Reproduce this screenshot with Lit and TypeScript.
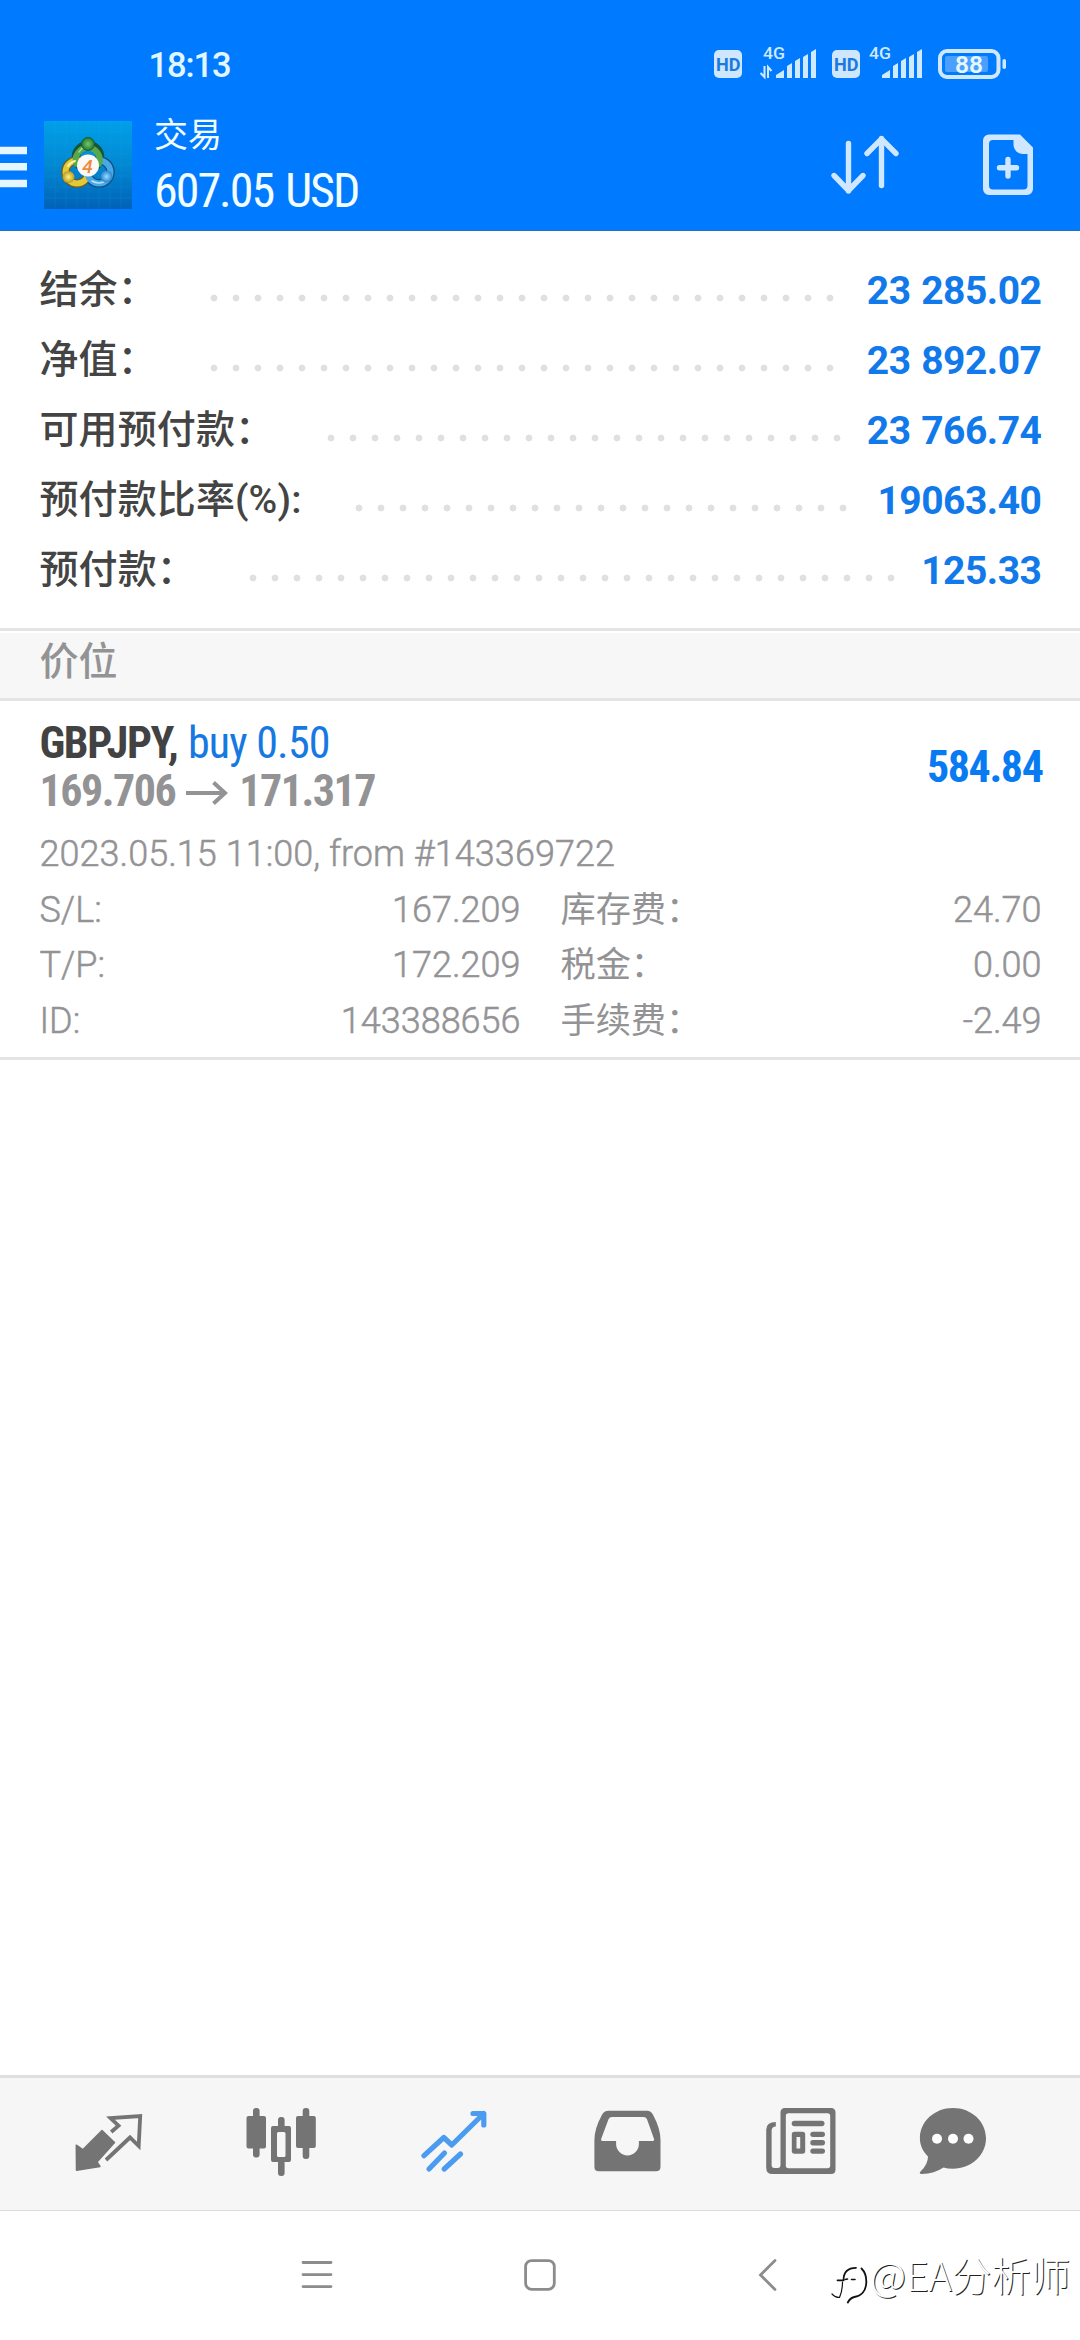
import { LitElement, html, css, svg } from "lit";
import { customElement } from "lit/decorators.js";

interface SummaryRow { label: string; value: string; dots: number; }

const SUMMARY: SummaryRow[] = [
  { label: "结余：", value: "23 285.02", dots: 29 },
  { label: "净值：", value: "23 892.07", dots: 29 },
  { label: "可用预付款：", value: "23 766.74", dots: 24 },
  { label: "预付款比率(%):", value: "19063.40", dots: 23 },
  { label: "预付款：", value: "125.33", dots: 30 },
];

const DETAILS = [
  ["S/L:", "167.209", "库存费：", "24.70"],
  ["T/P:", "172.209", "税金：", "0.00"],
  ["ID:", "143388656", "手续费：", "-2.49"],
];

const signal = svg`<path d="M0 29v-3l8-5v8zM11 29V17l5-3v15zM19 29V12l5-3v20zM27 29V8l5-3v24zM35 29V3l5-3v29z" fill="#cfeaff"/>`;

@customElement("app-root")
export class AppRoot extends LitElement {
  static styles = css`
    :host {
      display: flex;
      flex-direction: column;
      width: 1080px;
      height: 2340px;
      overflow: hidden;
      position: relative;
      background: #fff;
      font-family: Roboto, "Noto Sans CJK SC", sans-serif;
      color: #939395;
    }
    svg { display: block; flex: none; overflow: visible; }
    .head { background: #007aff; height: 230px; border-bottom: 1px solid #1f6fc4; color: #f2fdff; flex: none; }
    .status { display: flex; height: 86px; align-items: flex-start; }
    .time { font-size: 34.5px; font-weight: 500; line-height: 40px; margin: 45px 0 0 148.5px; width: 565.5px; letter-spacing: -1.1px; color: #e0f7ff; }
    .sicons { margin-top: 45px; }
    .bar { display: flex; align-items: flex-start; height: 144px; }
    .burger { margin-top: 60px; }
    .logo { margin: 35px 0 0 17px; }
    .titles { margin: 28px 0 0 22px; width: 677px; }
    .title { font-size: 34px; line-height: 42px; }
    .cond { font-family: "Roboto Condensed", Roboto, sans-serif; font-stretch: 75%; white-space: nowrap; }
    .sum { font-size: 48px; line-height: 56px; margin-top: 7px; letter-spacing: -2px; word-spacing: 3px; }
    .summary { padding: 24px 38.6px 23px 39.5px; border-bottom: 3px solid #e4e4e4; flex: none; }
    .row { display: flex; height: 70px; align-items: center; font-size: 39px; }
    .label { color: #444; font-weight: 500; white-space: nowrap; height: 50px; line-height: 50px; margin-top: -1px; letter-spacing: 0.1px; }
    .leader { height: 8px; margin: 15px auto 0 46px; background: radial-gradient(circle at 11px 4px, #e0e0e0 3px, transparent 3.8px) 0 0 / 22px 8px repeat-x; }
    .value { color: #1279ea; font-weight: 700; white-space: nowrap; letter-spacing: -0.5px; word-spacing: 1.5px; margin-top: 2px; }
    .section { margin-top: 2px; height: 65px; line-height: 58px; background: #f7f7f7; border-bottom: 3px solid #e4e4e4; padding-left: 39.5px; font-size: 39px; font-weight: 500; flex: none; }
    .position { padding: 18px 38.5px 0 39.5px; height: 338px; border-bottom: 3px solid #e4e4e4; flex: none; }
    .top { display: flex; justify-content: space-between; align-items: center; font-size: 44px; height: 96px; letter-spacing: -1.4px; }
    .line { line-height: 48px; height: 48px; display: flex; align-items: center; }
    .sym { color: #424242; font-weight: 700; }
    .side { color: #1778e2; margin-left: 10.5px; letter-spacing: -0.8px; }
    .price { font-weight: 700; letter-spacing: -1.5px; }
    .arrow { margin: 4px 11px 0 11px; }
    .profit { color: #087bf2; font-weight: 700; margin-right: -1px; }
    .date { font-size: 36px; font-weight: 300; -webkit-text-stroke: 0.5px #939395; line-height: 44px; margin-top: 17px; letter-spacing: 0.04px; }
    .grid { display: grid; grid-template-columns: 240px 241px 40px 220px 1fr; grid-auto-rows: 55.3px; font-size: 36px; font-weight: 300; -webkit-text-stroke: 0.5px #939395; line-height: 55.3px; margin-top: 7px; white-space: nowrap; }
    .r { text-align: right; }
    .c3 { grid-column: 4; font-size: 35.2px; font-weight: 370; -webkit-text-stroke: 0; }
    .c4 { grid-column: 5; }
    .space { flex: 1; }
    .tabs { display: flex; height: 110px; padding: 22px 0 0 68px; gap: 93px; background: #f6f6f6; border-top: 3px solid #dfdfdf; border-bottom: 1px solid #dcdcdc; flex: none; }
    .chat { margin-left: -21px; }
    .sysnav { display: flex; height: 129px; padding-top: 44px; box-sizing: border-box; flex: none; }
    .n1 { margin-left: 297px; }
    .n2 { margin-left: 183px; }
    .n3 { margin-left: 187px; }
    .mark { position: absolute; left: 830px; top: 2246px; display: flex; align-items: center; height: 54px; color: #fff; font-size: 39.5px; font-weight: 300; font-family: "Noto Sans CJK SC", sans-serif; text-shadow: 1px 1px 0 #222; white-space: nowrap; }
  `;

  render() {
    return html`
      <header class="head">
        <div class="status">
          <div class="time">18:13</div>
          <svg class="sicons" width="296" height="40" viewBox="714 45 296 40">
            <g font-family="Roboto" font-weight="700">
              <rect x="714" y="50" width="28" height="28" rx="5" fill="#cfe6ff"/>
              <text x="716" y="71" font-size="19" textLength="24.500" lengthAdjust="spacingAndGlyphs" fill="#1b7ae0">HD</text>
              <rect x="832" y="50" width="28" height="28" rx="5" fill="#cfe6ff"/>
              <text x="834" y="71" font-size="19" textLength="24.500" lengthAdjust="spacingAndGlyphs" fill="#1b7ae0">HD</text>
            </g>
            <g font-family="Roboto" font-size="16.5" font-weight="500" fill="#cfeaff">
              <text x="763" y="59" textLength="22" lengthAdjust="spacingAndGlyphs">4G</text>
              <text x="869" y="59" textLength="22" lengthAdjust="spacingAndGlyphs">4G</text>
            </g>
            <path d="M764.5 66v11l-4-4M768 78V67l3.5 4" fill="none" stroke="#cfeaff" stroke-width="2"/>
            <g transform="translate(776 49)">${signal}</g>
            <g transform="translate(882 49)">${signal}</g>
            <rect x="940" y="51" width="58.500" height="26" rx="7" fill="none" stroke="#cfe8ff" stroke-width="4"/>
            <rect x="945" y="56" width="43" height="16" rx="2" fill="#4ba0ff"/>
            <rect x="1002.500" y="59" width="3.500" height="10" rx="1.700" fill="#cfe8ff"/>
            <text x="955" y="72.500" font-family="Roboto" font-size="23" font-weight="600" textLength="28" lengthAdjust="spacingAndGlyphs" fill="#e6f8ff">88</text>
          </svg>
        </div>
        <div class="bar">
          <svg class="burger" width="27" height="42" viewBox="0 146 27 42">
            <path d="M0 146.700h27v7.500H0zM0 163h27v7.500H0zM0 179.700h27v7.500H0z" fill="#e6f6ff"/>
          </svg>
          <svg class="logo" width="88" height="88" viewBox="0 0 88 88">
            <defs>
              <linearGradient id="bg" x1="0" y1="0" x2="0" y2="1"><stop offset="0" stop-color="#00a0e8"/><stop offset=".5" stop-color="#0288d2"/><stop offset="1" stop-color="#0062b8"/></linearGradient>
              <radialGradient id="gg"><stop offset="0" stop-color="#7cc46a"/><stop offset="1" stop-color="#1f7a35"/></radialGradient>
              <radialGradient id="gy"><stop offset="0" stop-color="#fff08a"/><stop offset="1" stop-color="#b89a1c"/></radialGradient>
              <radialGradient id="gb"><stop offset="0" stop-color="#9bdcff"/><stop offset="1" stop-color="#2383cc"/></radialGradient>
            </defs>
            <rect width="88" height="88" fill="url(#bg)"/>
            <path d="M11 0v88M22 0v88M33 0v88M44 0v88M55 0v88M66 0v88M77 0v88M0 11h88M0 22h88M0 33h88M0 44h88M0 55h88M0 66h88M0 77h88" stroke="#39b4f0" stroke-opacity=".13" stroke-width="1"/>
            <g fill="none" stroke-linecap="round">
              <circle cx="44" cy="36" r="12" stroke="#17543a" stroke-width="8.500"/>
              <circle cx="33" cy="51" r="11.500" stroke="#655f22" stroke-width="8.500"/>
              <circle cx="55" cy="51" r="11.500" stroke="#124d80" stroke-width="8.500"/>
              <circle cx="33" cy="51" r="11.500" stroke="#e3c838" stroke-width="6"/>
              <circle cx="55" cy="51" r="11.500" stroke="#4aa8e4" stroke-width="6"/>
              <path d="M32.500 43A12 12 0 1 1 55 43" stroke="#55a94c" stroke-width="6"/>
              <path d="M24 45a12 12 0 0 1 7-5" stroke="#fff2a0" stroke-width="2"/>
              <path d="M48 60a13 13 0 0 0 15-1" stroke="#b5e5ff" stroke-width="1.500"/>
              <path d="M35 31a12 12 0 0 1 5-5" stroke="#a5dc8f" stroke-width="1.500"/>
            </g>
            <circle cx="44" cy="23" r="6.500" fill="url(#gg)" stroke="#185a30" stroke-width="1"/>
            <circle cx="24.500" cy="56" r="6" fill="url(#gy)"/>
            <circle cx="62.500" cy="55.500" r="6" fill="url(#gb)"/>
            <circle cx="44" cy="44.500" r="11" fill="#fbf8f6"/>
            <text x="43.500" y="51.500" text-anchor="middle" font-family="Roboto" font-style="italic" font-weight="500" font-size="19" fill="#ee8a3c">4</text>
          </svg>
          <div class="titles">
            <div class="title">交易</div>
            <div class="sum cond">607.05 USD</div>
          </div>
          <svg class="tools" width="204" height="64" viewBox="831 86 204 64">
            <g fill="none" stroke="#cfe8ff" stroke-width="5.400" stroke-linecap="round" stroke-linejoin="round">
              <path d="M848.500 143.500V191M834 175.500l14.500 15 14.500-15M881.500 185.500V138.500M867 153.500l14.500-14.700 14.500 14.700"/>
              <path d="M1008 159.500v16.500M999.500 167.700h17"/>
            </g>
            <path fill-rule="evenodd" fill="#cfe8ff" d="M989 134.500h31l13 13V189a6 6 0 0 1-6 6h-38a6 6 0 0 1-6-6v-48.500a6 6 0 0 1 6-6zM993 140a4 4 0 0 0-4 4v41.500a4 4 0 0 0 4 4h30.500a4 4 0 0 0 4-4V154h-5a9 9 0 0 1-9-9v-5z"/>
          </svg>
        </div>
      </header>

      <section class="summary">
        ${SUMMARY.map(r => html`<div class="row">
          <span class="label">${r.label}</span>
          <span class="leader" style="width:${r.dots * 22}px"></span>
          <span class="value">${r.value}</span>
        </div>`)}
      </section>
      <div class="section">价位</div>

      <section class="position">
        <div class="top">
          <div>
            <div class="line cond"><span class="sym">GBPJPY,</span><span class="side">buy 0.50</span></div>
            <div class="line cond price"><span>169.706</span>
              <svg class="arrow" width="42" height="24" viewBox="0 0 42 24"><path d="M0 12h38M27.500 1.500L39 12 27.500 22.500" fill="none" stroke="#939395" stroke-width="4"/></svg>
              <span>171.317</span></div>
          </div>
          <div class="profit cond">584.84</div>
        </div>
        <div class="date">2023.05.15 11:00, from #143369722</div>
        <div class="grid">
          ${DETAILS.map(d => html`<span>${d[0]}</span><span class="r">${d[1]}</span><span class="c3">${d[2]}</span><span class="c4 r">${d[3]}</span>`)}
        </div>
      </section>

      <div class="space"></div>

      <nav class="tabs">
        <svg width="80" height="80" viewBox="68 2100 80 80">
          <path d="M102 2130.500l12.500 12-17.500 19.500 3 4.500-23.500 3.700-.2-25 6.500 4.500z" fill="#747474" stroke="#747474" stroke-width="1.500" stroke-linejoin="round"/>
          <path d="M111.200 2132l7.300-6.300-8-7.700 29.700-2-1.500 30-8.700-8.500-24 22.500" fill="none" stroke="#747474" stroke-width="3.800" stroke-linejoin="miter"/>
        </svg>
        <svg width="80" height="80" viewBox="241 2100 80 80">
          <g fill="#747474">
            <rect x="246.500" y="2116" width="19.500" height="32.500" rx="2"/><rect x="253" y="2108" width="6.600" height="49.500" rx="3"/>
            <rect x="296" y="2116" width="19.800" height="32" rx="2"/><rect x="302.700" y="2108" width="6.600" height="51" rx="3"/>
            <rect x="278" y="2117" width="6.600" height="12" rx="3"/><rect x="278" y="2160" width="6.600" height="16" rx="3"/>
            <path fill-rule="evenodd" d="M273 2126h16q2 0 2 2v32q0 2-2 2h-16q-2 0-2-2v-32q0-2 2-2zM278.500 2132q-1.500 0-1.500 1.500v22q0 1.500 1.500 1.500h5.500q1.500 0 1.500-1.500v-22q0-1.500-1.500-1.500z"/>
          </g>
        </svg>
        <svg width="80" height="80" viewBox="414 2100 80 80">
          <path d="M424 2155.700l19.800-18.200 8 7.500 32-31.500M473 2113.500h10.800V2125M444.500 2153L429 2169M460.500 2154l-16.300 15" fill="none" stroke="#4b9bf0" stroke-width="5.200" stroke-linecap="round" stroke-linejoin="round"/>
        </svg>
        <svg width="80" height="80" viewBox="587 2100 80 80">
          <path fill-rule="evenodd" fill="#747474" d="M608.500 2110.700h38.500q4 0 6 4 7.500 14 7.500 25v27q0 4.600-4.600 4.600h-57q-4.500 0-4.500-4.600v-27q0-11 7.600-25 2-4 6.500-4zM612 2117q-2.500 0-3.500 2.300l-7 18.700q-1.200 3 1 3h13.600v3a11.400 11.400 0 0 0 22.800 0v-3h13.800q2.200 0 1-3l-6.700-18.700q-1-2.300-3.500-2.300z"/>
        </svg>
        <svg width="80" height="80" viewBox="760 2100 80 80">
          <g fill="#747474">
            <path fill-rule="evenodd" d="M785 2108h46q4.500 0 4.500 4.500v57q0 4.500-4.500 4.500h-58.500q-6.300 0-6.300-6.300v-38q0-7.500 9.600-7.700v4.500q-4.200 0-4.200 4.500v34q0 3 2.700 3h3.500q2.700 0 2.700-3v-52.500q0-4.500 4.500-4.500zM788.500 2113.300q-2.700 0-2.700 2.700v49.500q0 2.800 2.700 2.800h39q2.700 0 2.700-2.800V2116q0-2.700-2.700-2.700z"/>
            <rect x="791.700" y="2120.700" width="32.800" height="5.600" rx="2.800"/>
            <path fill-rule="evenodd" d="M794.500 2131.700h8q2.700 0 2.700 2.700v16.600q0 2.700-2.700 2.700h-8q-2.700 0-2.700-2.700v-16.600q0-2.700 2.700-2.700zM796.500 2137v11.500h3.700V2137z"/>
            <rect x="810.300" y="2131.700" width="14.700" height="5.200" rx="2.600"/><rect x="810.300" y="2140" width="14.700" height="5.400" rx="2.600"/><rect x="810.300" y="2148.500" width="14.700" height="5.200" rx="2.600"/>
          </g>
        </svg>
        <svg class="chat" width="80" height="80" viewBox="912 2100 80 80">
          <path d="M953 2108c18.500 0 33 13.500 33 30.300s-14.500 30.400-33 30.400q-5.500 0-9.500-1.200-9 6-21.500 6.500-3.500 0-1.500-2.500 7.500-7 7.500-15c-5-5-8.100-11-8.100-18.200C919.900 2121.500 934.500 2108 953 2108z" fill="#747474"/>
          <g fill="#fff"><circle cx="937" cy="2138.700" r="5"/><circle cx="953" cy="2138.700" r="5"/><circle cx="968.500" cy="2138.700" r="5"/></g>
        </svg>
      </nav>

      <div class="sysnav">
        <svg class="n1" width="40" height="40" viewBox="297 2255 40 40"><path d="M303 2262.500h28M303 2274.600h28M303 2286.600h28" stroke="#8c8c8c" stroke-width="2.800" stroke-linecap="round"/></svg>
        <svg class="n2" width="40" height="40" viewBox="520 2255 40 40"><rect x="525.600" y="2260.600" width="28.700" height="28.700" rx="6" fill="none" stroke="#8c8c8c" stroke-width="2.800"/></svg>
        <svg class="n3" width="40" height="40" viewBox="747 2255 40 40"><path d="M775 2260.500l-14.500 14.500 14.500 14.500" fill="none" stroke="#8c8c8c" stroke-width="2.800" stroke-linecap="round"/></svg>
      </div>

      <div class="mark">
        <svg width="40" height="54" viewBox="830 2246 40 54">
          <g fill="none" stroke="#111" stroke-linecap="round">
            <path d="M837.500 2280.300h6c0-8 4-12.500 12.500-12.500" stroke-width="1.700"/>
            <path d="M842.500 2282c0 6-1 11-3 15.500-3 0-5.500-1.200-7.500-3.500" stroke-width="1.200"/>
            <path d="M845 2279.500l2.500-.500M851.500 2279.500h3.500" stroke-width="1.600"/>
            <path d="M861.500 2268.500c4 4 5 8 4.800 14-.3 8-4.800 13.500-12 14.500-3.500.800-5 2.500-6.500 5.500" stroke-width="1.800"/>
          </g>
        </svg>
        <span>@EA分析师</span>
      </div>
    `;
  }
}
